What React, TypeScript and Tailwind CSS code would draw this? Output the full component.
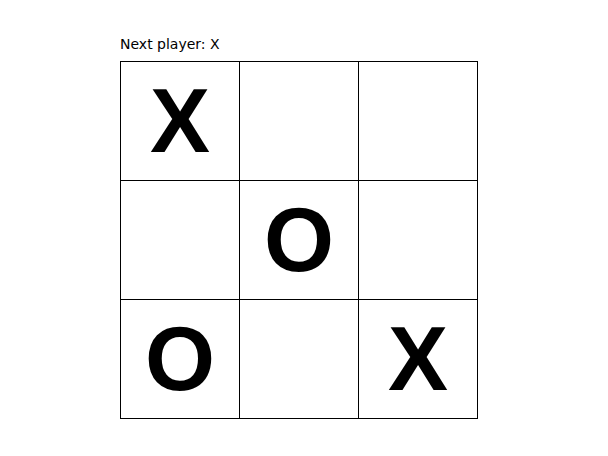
const squares = ["X", null, null, null, "O", null, "O", null, "X"];

function Square({ value }: { value: string | null }) {
  return (
    <div className="flex items-center justify-center w-[118px] h-[118px] bg-white text-black text-[90px] font-bold leading-none font-['Liberation_Sans',Arial,sans-serif]">
      {value}
    </div>
  );
}

export default function App() {
  return (
    <div className="w-[608px] h-[456px] bg-white pt-[35px] pl-[120px]">
      <div className="text-[14px] leading-[18px] text-black mb-[8px] font-['DejaVu_Sans',Verdana,sans-serif]">
        Next player: X
      </div>
      <div className="grid grid-cols-3 gap-px bg-black border border-black w-[358px]">
        {squares.map((v, i) => (
          <Square key={i} value={v} />
        ))}
      </div>
    </div>
  );
}
